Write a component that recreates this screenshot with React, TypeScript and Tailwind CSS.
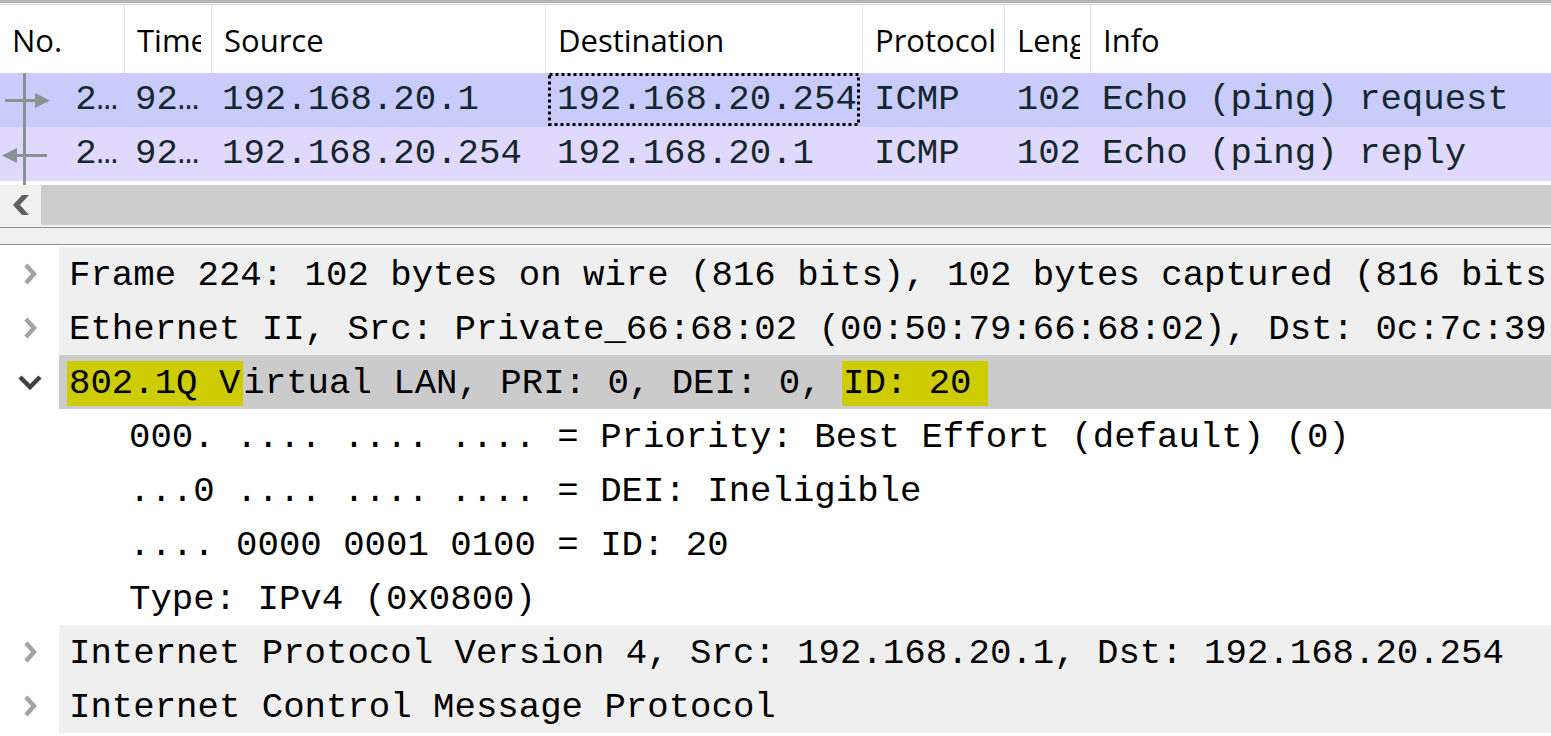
import React from "react";

const MONO = { fontFamily: '"Liberation Mono", "DejaVu Sans Mono", monospace' };
const SANS = { fontFamily: '"Open Sans", "Noto Sans", sans-serif' };

const cols = [
  { key: "no", w: "w-[124px]", label: "No." },
  { key: "time", w: "w-[87px]", label: "Time" },
  { key: "src", w: "w-[334px]", label: "Source" },
  { key: "dst", w: "w-[317px]", label: "Destination" },
  { key: "proto", w: "w-[142px]", label: "Protocol" },
  { key: "len", w: "w-[86px]", label: "Length" },
  { key: "info", w: "flex-1", label: "Info" },
];

function Header() {
  return (
    <div className="flex h-[68px] bg-white text-[31px] text-black" style={SANS}>
      {cols.map((c, i) => (
        <div
          key={c.key}
          className={`${c.w} h-full flex items-center pl-[12px] pr-[10px] overflow-hidden whitespace-nowrap ${
            i > 0 ? "border-l border-[#e3e3e3]" : ""
          }`}
        >
          <div className="overflow-hidden pt-[2px]">{c.label}</div>
        </div>
      ))}
    </div>
  );
}

function PacketRow({
  bg,
  src,
  dst,
  info,
  focus,
}: {
  bg: string;
  src: string;
  dst: string;
  info: string;
  focus?: boolean;
}) {
  return (
    <div className={`flex h-[54px] ${bg} text-[#12272e] text-[35.7px] leading-none`} style={MONO}>
      <div className="w-[124px] h-full flex items-center justify-end pr-[6px]">2…</div>
      <div className="w-[87px] h-full flex items-center pl-[11px]">92…</div>
      <div className="w-[334px] h-full flex items-center pl-[11px] whitespace-nowrap">{src}</div>
      <div className="w-[317px] h-full flex items-center pl-[12px] whitespace-nowrap relative">
        {dst}
        {focus && (
          <svg className="absolute left-[3px] top-0" width="312" height="54" viewBox="0 0 312 54">
            <rect
              x="1.5"
              y="1.5"
              width="309"
              height="50"
              fill="none"
              stroke="#000"
              strokeWidth="3"
              strokeDasharray="3 3"
            />
          </svg>
        )}
      </div>
      <div className="w-[142px] h-full flex items-center pl-[12px]">ICMP</div>
      <div className="w-[86px] h-full flex items-center justify-end pr-[9px]">102</div>
      <div className="flex-1 h-full flex items-center pl-[12px] whitespace-nowrap">{info}</div>
    </div>
  );
}

function Chevron({ open }: { open?: boolean }) {
  if (open) {
    return (
      <svg width="26" height="18" viewBox="0 0 26 18">
        <path d="M3 4 L13 14 L23 4" fill="none" stroke="#404040" strokeWidth="4.5" />
      </svg>
    );
  }
  return (
    <svg width="18" height="24" viewBox="0 0 18 24">
      <path d="M5 3 L13 12 L5 21" fill="none" stroke="#a3a3a3" strokeWidth="4.5" />
    </svg>
  );
}

function TreeRow({
  children,
  level,
  bg,
  open,
}: {
  children: React.ReactNode;
  level: 0 | 1;
  bg?: string;
  open?: boolean;
}) {
  return (
    <div className="flex h-[54px] text-black text-[35.7px] leading-none" style={MONO}>
      <div className="w-[59px] h-full flex items-center justify-center bg-white">
        {level === 0 && <Chevron open={open} />}
      </div>
      <div
        className={`flex-1 h-full flex items-center pt-[3px] whitespace-nowrap overflow-hidden ${
          level === 0 ? "pl-[10px]" : "pl-[70px]"
        } ${bg ?? "bg-white"}`}
      >
        <span className="whitespace-pre">{children}</span>
      </div>
    </div>
  );
}

export default function App() {
  return (
    <div className="w-[1551px] h-[736px] overflow-hidden bg-white flex flex-col">
      <div className="h-[3px] bg-[#b4b4b4]" />
      <div className="h-[1px] bg-white" />
      <div className="h-[1px] bg-[#d6d6d6]" />
      <Header />
      <div className="relative">
        <PacketRow bg="bg-[#c9ccfb]" src="192.168.20.1" dst="192.168.20.254" info="Echo (ping) request" focus />
        <PacketRow bg="bg-[#e0d9fd]" src="192.168.20.254" dst="192.168.20.1" info="Echo (ping) reply" />
        <svg className="absolute left-0 top-0" width="60" height="112" viewBox="0 0 60 112">
          <rect x="23" y="0" width="3" height="112" fill="#899393" />
          <rect x="5" y="26" width="32" height="3" fill="#899393" />
          <polygon points="35,20 50,27.5 35,35" fill="#899393" />
          <rect x="14" y="81" width="33" height="3" fill="#899393" />
          <polygon points="17,75 2,82.5 17,90" fill="#899393" />
        </svg>
      </div>
      <div className="h-[4px] bg-white" />
      <div className="h-[40px] flex bg-[#cdcdcd]">
        <div className="w-[41px] h-full bg-[#f0f0f0] flex items-center justify-center">
          <svg width="18" height="20" viewBox="0 0 18 20">
            <polygon points="10,0 17,0 8,10 17,20 10,20 1,10" fill="#606060" />
          </svg>
        </div>
        <div className="flex-1" />
      </div>
      <div className="h-[2px] bg-[#f0f0f0]" />
      <div className="h-px bg-[#8e8e8e]" />
      <div className="h-[16px] bg-[#f0f0f0]" />
      <div className="h-px bg-[#8e8e8e]" />
      <div className="h-[2px] bg-white" />
      <TreeRow level={0} bg="bg-[#efefef]">
        Frame 224: 102 bytes on wire (816 bits), 102 bytes captured (816 bits) on interface 0
      </TreeRow>
      <TreeRow level={0} bg="bg-[#efefef]">
        Ethernet II, Src: Private_66:68:02 (00:50:79:66:68:02), Dst: 0c:7c:39:00:00:00 (0c:7c:39:00:00:00)
      </TreeRow>
      <TreeRow level={0} bg="bg-[#cbcbcb]" open>
        <span className="bg-[#cccc00] py-[2px] pr-[3px] -ml-[2px] pl-[2px]">802.1Q V</span>
        {"irtual LAN, PRI: 0, DEI: 0, "}
        <span className="bg-[#cccc00] py-[2px] -ml-[1px] pl-[1px] pr-[17px]">ID: 20</span>
      </TreeRow>
      <TreeRow level={1}>000. .... .... .... = Priority: Best Effort (default) (0)</TreeRow>
      <TreeRow level={1}>...0 .... .... .... = DEI: Ineligible</TreeRow>
      <TreeRow level={1}>.... 0000 0001 0100 = ID: 20</TreeRow>
      <TreeRow level={1}>Type: IPv4 (0x0800)</TreeRow>
      <TreeRow level={0} bg="bg-[#efefef]">
        Internet Protocol Version 4, Src: 192.168.20.1, Dst: 192.168.20.254
      </TreeRow>
      <TreeRow level={0} bg="bg-[#efefef]">
        Internet Control Message Protocol
      </TreeRow>
    </div>
  );
}
